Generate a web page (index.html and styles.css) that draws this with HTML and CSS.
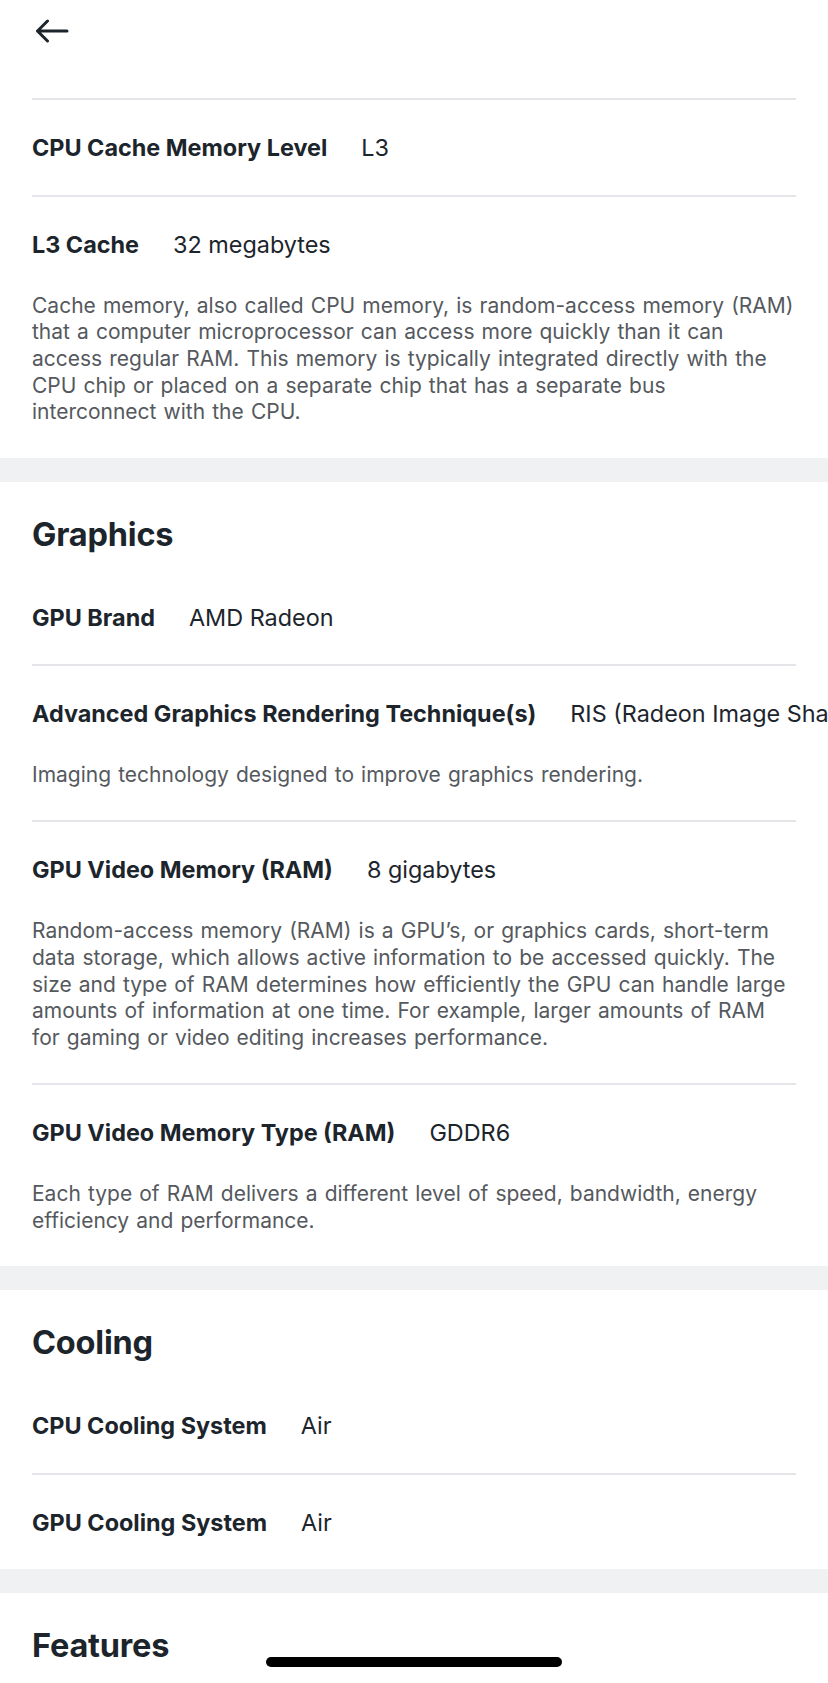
FILE: index.html
```html
<!DOCTYPE html>
<html lang="en">
<head>
<meta charset="utf-8">
<title>Specifications</title>
<link rel="stylesheet" href="styles.css">
</head>
<body>
<header class="topbar">
  <button class="back" aria-label="Back">
    <svg width="34" height="24" viewBox="0 0 34 24" fill="none" stroke="#1d252c" stroke-width="3" stroke-linecap="round" stroke-linejoin="round"><path d="M32 12H2.5M12.5 2L2.5 12l10 10"/></svg>
  </button>
</header>

<section class="section">
  <div class="row">
    <div class="spec"><span class="label">CPU Cache Memory Level</span><span class="value">L3</span></div>
  </div>
  <div class="row">
    <div class="spec"><span class="label">L3 Cache</span><span class="value">32 megabytes</span></div>
    <p class="desc">Cache memory, also called CPU memory, is random-access memory (RAM) that a computer microprocessor can access more quickly than it can access regular RAM. This memory is typically integrated directly with the CPU chip or placed on a separate chip that has a separate bus interconnect with the CPU.</p>
  </div>
</section>

<div class="band"></div>

<section class="section">
  <h2 class="heading">Graphics</h2>
  <div class="row">
    <div class="spec"><span class="label">GPU Brand</span><span class="value">AMD Radeon</span></div>
  </div>
  <div class="row">
    <div class="spec"><span class="label">Advanced Graphics Rendering Technique(s)</span><span class="value">RIS (Radeon Image Sharpening)</span></div>
    <p class="desc">Imaging technology designed to improve graphics rendering.</p>
  </div>
  <div class="row">
    <div class="spec"><span class="label">GPU Video Memory (RAM)</span><span class="value">8 gigabytes</span></div>
    <p class="desc">Random-access memory (RAM) is a GPU’s, or graphics cards, short-term data storage, which allows active information to be accessed quickly. The size and type of RAM determines how efficiently the GPU can handle large amounts of information at one time. For example, larger amounts of RAM for gaming or video editing increases performance.</p>
  </div>
  <div class="row">
    <div class="spec"><span class="label">GPU Video Memory Type (RAM)</span><span class="value">GDDR6</span></div>
    <p class="desc">Each type of RAM delivers a different level of speed, bandwidth, energy efficiency and performance.</p>
  </div>
</section>

<div class="band"></div>

<section class="section">
  <h2 class="heading">Cooling</h2>
  <div class="row">
    <div class="spec"><span class="label">CPU Cooling System</span><span class="value">Air</span></div>
  </div>
  <div class="row">
    <div class="spec"><span class="label">GPU Cooling System</span><span class="value">Air</span></div>
  </div>
</section>

<div class="band"></div>

<section class="section">
  <h2 class="heading">Features</h2>
  <div class="row">
    <div class="spec"><span class="label">Bluetooth Enabled</span><span class="value">Yes</span></div>
  </div>
</section>

<div class="home-indicator"></div>
</body>
</html>
```

FILE: styles.css
```css
html, body {
  margin: 0;
  padding: 0;
  background: #ffffff;
  overflow: hidden;
}

body {
  font-family: "Inter", "Roboto", "Liberation Sans", sans-serif;
  color: #1d252c;
  width: 828px;
}

.topbar {
  height: 98px;
  padding: 19px 0 0 35px;
  box-sizing: border-box;
}

.back {
  display: block;
  padding: 0;
  margin: 0;
  border: 0;
  background: none;
  line-height: 0;
}

.section {
  padding: 0 32px;
}

.heading {
  margin: 0 0 15px;
  padding-top: 33px;
  font-size: 32.5px;
  line-height: 40px;
  font-weight: 700;
  color: #1d252c;
  letter-spacing: -0.2px;
}

.row {
  border-top: 2px solid #e4e5e8;
  padding: 33px 0 31.5px;
}

.heading + .row {
  border-top: none;
}

.spec {
  display: flex;
  align-items: baseline;
  gap: 34px;
  white-space: nowrap;
  font-size: 23.4px;
  line-height: 30px;
}

.label {
  font-weight: 700;
  color: #1d252c;
}

.value {
  font-weight: 400;
  color: #1d252c;
}

.desc {
  margin: 33px 0 0;
  font-size: 21px;
  line-height: 26.7px;
  word-spacing: 1.2px;
  color: #55595e;
}

.band {
  height: 24px;
  background: #f0f1f3;
}

.home-indicator {
  position: fixed;
  left: 50%;
  bottom: 16px;
  width: 296px;
  height: 10px;
  margin-left: -148px;
  border-radius: 5px;
  background: #000000;
}
```
